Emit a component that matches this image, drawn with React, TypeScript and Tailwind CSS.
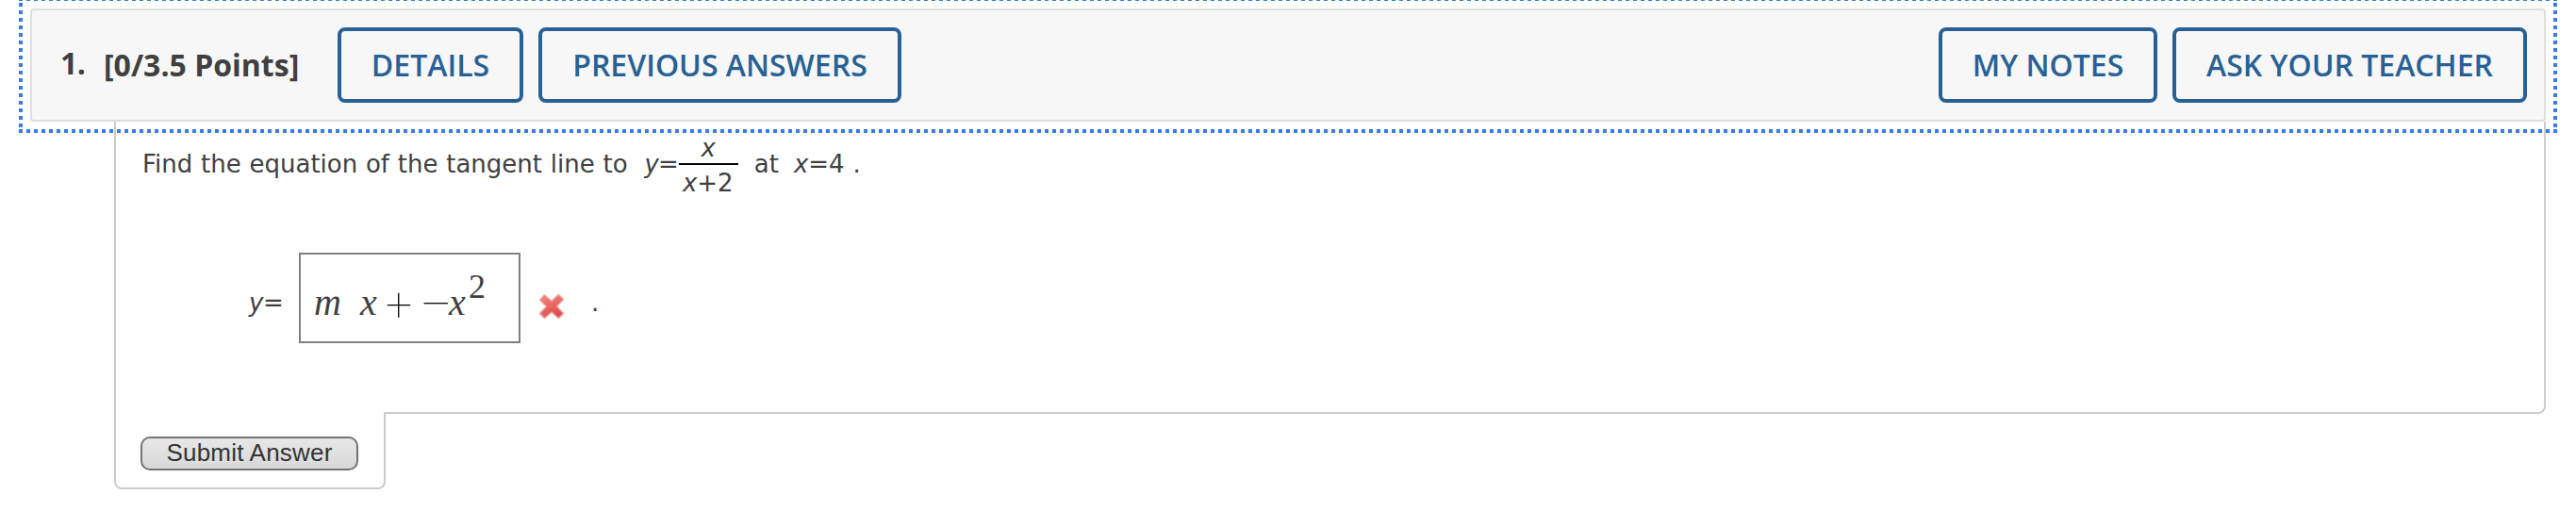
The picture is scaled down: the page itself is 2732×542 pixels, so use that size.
import type { ReactNode } from "react";

const V_DOTS = "absolute top-[3px] h-[132px] w-1 bg-[repeating-linear-gradient(to_bottom,#377ddf_0_4px,transparent_4px_8px)]";
const H_DOTS = "absolute left-5 right-5 bg-[repeating-linear-gradient(to_right,#377ddf_0_4px,transparent_4px_8px)]";

function FocusOutline() {
  return (
    <div className="pointer-events-none absolute inset-x-0 top-0 h-[141px]">
      <div className={`${H_DOTS} top-0 h-px`} />
      <div className={`${V_DOTS} left-5`} />
      <div className={`${V_DOTS} right-5`} />
      <div className={`${H_DOTS} bottom-0 h-1`} />
    </div>
  );
}

function HeaderButton({ className, children }: { className: string; children: ReactNode }) {
  return (
    <button
      className={`flex h-20 shrink-0 items-center justify-center whitespace-nowrap rounded-lg border-4 border-[#286195] text-[32px] font-semibold leading-none text-[#286195] ${className}`}
    >
      {children}
    </button>
  );
}

function WrongMark() {
  return (
    <svg width="28" height="28" viewBox="0 0 28 28">
      <defs>
        <linearGradient id="mark" x1="0" y1="0" x2="0.4" y2="1">
          <stop offset="0" stopColor="#ee8a86" />
          <stop offset="0.5" stopColor="#e96b68" />
          <stop offset="1" stopColor="#e04c49" />
        </linearGradient>
      </defs>
      <path
        d="M6.5 2 L14 8.5 L21.5 1.5 L26.5 6.5 L19.5 14 L26.5 21.5 L21.5 26.5 L14 20 L6.5 26.5 L1.5 21.5 L8.5 14 L1.5 7 Z"
        fill="url(#mark)"
        stroke="#f0a09d"
        strokeWidth="1.5"
        strokeLinejoin="round"
      />
    </svg>
  );
}

export default function App() {
  return (
    <div className="relative flex h-[542px] w-[2732px] flex-col overflow-hidden bg-white pl-8 pr-8 pt-[9px] font-['DejaVu_Sans',sans-serif] text-[26px] leading-none text-[#404040]">
      <FocusOutline />
      <header className="flex h-[120px] w-[2668px] shrink-0 items-center rounded border-2 border-[#dedede] bg-[#f7f7f7] pl-[30px] pr-[18px] font-['Open_Sans',sans-serif]">
        <span className="relative -top-0.5 w-[46px] text-[32px] font-bold tracking-[-0.5px]">1.</span>
        <h1 className="w-[248px] whitespace-nowrap text-[32px] font-bold">[0/3.5 Points]</h1>
        <div className="flex gap-4">
          <HeaderButton className="w-[197px]">DETAILS</HeaderButton>
          <HeaderButton className="w-[385px]">PREVIOUS ANSWERS</HeaderButton>
        </div>
        <div className="ml-auto flex gap-4">
          <HeaderButton className="w-[232px]">MY NOTES</HeaderButton>
          <HeaderButton className="w-[376px]">ASK YOUR TEACHER</HeaderButton>
        </div>
      </header>

      <main className="relative ml-[89px] flex h-[310px] w-[2579px] shrink-0 flex-col rounded-br-lg border-x-2 border-b-2 border-[#cccccc] pl-[28px]">
        <p className="flex h-[90px] items-center whitespace-nowrap">
          <span className="[word-spacing:0.5px]">Find the equation of the tangent line to</span>
          <span className="ml-[18px] italic">y</span>
          <span className="-ml-px">=</span>
          <span className="flex w-[63px] flex-col items-center pt-0.5">
            <span className="italic">x</span>
            <span className="mb-[6px] mt-[3px] h-0.5 w-full bg-black" />
            <span className="-ml-px"><i>x</i>+2</span>
          </span>
          <span className="ml-[17px]">at</span>
          <span className="ml-4"><i>x</i>=4</span>
          <span className="ml-[9px]">.</span>
        </p>
        <div className="mt-[49px] flex h-24 items-center pl-[113px]">
          <span className="w-[53px] pt-2.5 tracking-[-0.5px]"><i>y</i>=</span>
          <span className="flex h-24 w-[235px] items-baseline border-2 border-[#808080] pl-[14px] pt-[22px] font-['Liberation_Serif',serif] text-[40px]">
            <i className="w-[49px]">m</i>
            <i className="w-[27px]">x</i>
            <span className="relative top-[6px] w-[39px] font-['Roboto',sans-serif] text-[50px] font-thin text-black">+</span>
            <span className="relative top-[6px] w-[28px] scale-x-125 font-['Roboto',sans-serif] text-[50px] font-thin text-black">−</span>
            <i className="w-[21px]">x</i>
            <span className="relative -top-[18px] text-[36px]">2</span>
          </span>
          <span className="ml-[19px] mt-[18px]"><WrongMark /></span>
          <span className="ml-[28px] mt-2.5">.</span>
        </div>
      </main>

      <footer className="relative -mt-0.5 ml-[89px] flex h-[82px] w-72 shrink-0 rounded-b-lg border-x-2 border-b-2 border-[#cccccc] bg-white pl-[26px] pt-[26px]">
        <button className="flex h-9 w-[231px] items-center justify-center whitespace-nowrap rounded-[10px] border-2 border-[#737373] bg-linear-to-b from-[#e7e7e7] to-[#d9d9d9] font-['Liberation_Sans',sans-serif] text-[26px] leading-none tracking-[0.2px] text-[#333]">
          <span className="-mt-0.5">Submit Answer</span>
        </button>
      </footer>
    </div>
  );
}
